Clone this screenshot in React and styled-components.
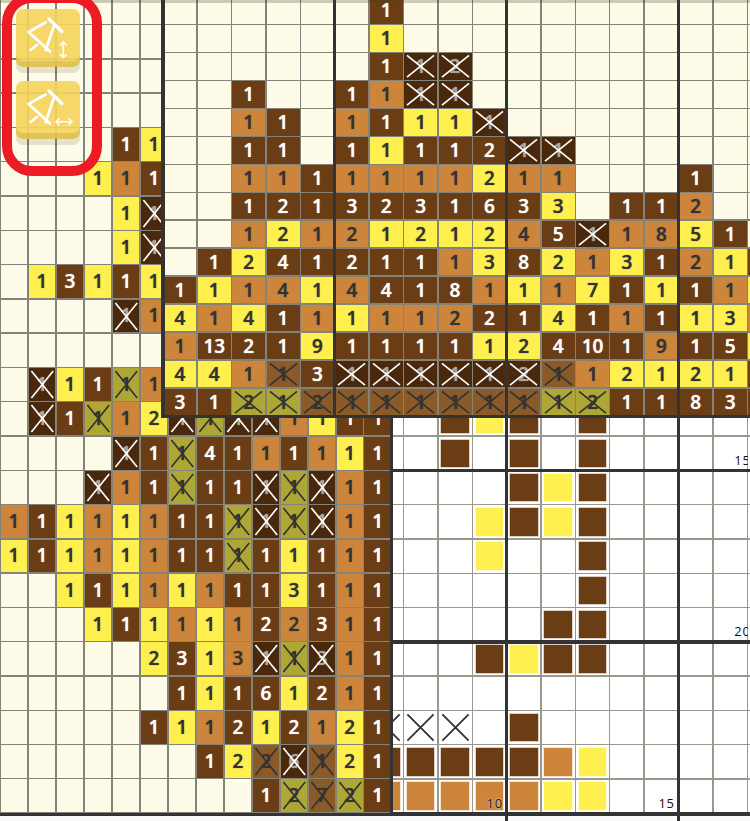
import React from 'react';
import styled, { createGlobalStyle } from 'styled-components';

const Global = createGlobalStyle`
  html, body { margin: 0; padding: 0; background: #fafafa; }
`;

const COL = 34.4;
const ROW = 34.3;
const CLUE = 28;
const GAP = 1.4;
const BOTTOM = 813.5;
const GRID_X = 162.7;

const tones = {
  D: { bg: '#6b3d14', fg: '#ffffff' },
  O: { bg: '#cc853a', fg: '#333333' },
  Y: { bg: '#fff04f', fg: '#333333' },
  xd: { bg: '#4a280b', fg: '#a9a6a0', mark: '#ffffff' },
  xo: { bg: '#8a5a28', fg: '#333333', mark: '#333333' },
  xy: { bg: '#aea736', fg: '#333333', mark: '#333333' },
};

const leftRows = [
  '', '', '', '',
  '. . . . D1 Y1',
  '. . . Y1 O1 D1',
  '. . . . Y1 xd1',
  '. . . . Y1 xd1',
  '. Y1 D3 Y1 D1 Y1',
  '. . . . xd1 O1',
  '',
  '. xd1 Y1 D1 xy1 O1',
  '. xd1 D1 xy1 O1 Y2 xd1 xy1 xd1 xd1 O1 Y1 D1 D1',
  '. . . . xd1 D1 xy1 D4 D1 O1 D1 O1 Y1 D1',
  '. . . xd1 O1 D1 xy1 D1 D1 xd1 xy1 xd1 O1 D1',
  'O1 D1 Y1 O1 Y1 O1 D1 D1 xy1 xd1 xy1 xd1 O1 D1',
  'Y1 D1 Y1 O1 Y1 O1 D1 D1 xy1 D1 Y1 D1 O1 D1',
  '. . Y1 D1 Y1 O1 Y1 O1 D1 D1 Y3 D1 O1 D1',
  '. . . Y1 D1 Y1 O1 Y1 O1 D2 O2 D3 O1 D1',
  '. . . . . Y2 D3 Y1 O3 xd1 xy1 xd3 O1 D1',
  '. . . . . . D1 Y1 D1 D6 Y1 D2 O1 D1',
  '. . . . . D1 Y1 O1 D2 Y1 D2 O1 Y2 D1',
  '. . . . . . . D1 Y2 xo2 xd6 xo1 Y2 D1',
  '. . . . . . . . . D1 xy2 xo7 xy2 D1',
];

const topRows = [
  '. . . . . . D1',
  '. . . . . . Y1',
  '. . . . . . D1 xd1 xd2',
  '. . D1 . . D1 O1 xd1 xd1',
  '. . O1 D1 . O1 D1 Y1 Y1 xd1',
  '. . D1 D1 . D1 Y1 D1 D1 D2 xd1 xd1',
  '. . O1 O1 D1 O1 O1 O1 O1 Y2 O1 O1 . . . D1',
  '. . D1 D2 D1 D3 D2 D3 D1 D6 D3 Y3 . D1 D1 O2',
  '. . O1 Y2 O1 O2 Y1 Y2 Y1 Y2 O4 D5 xd1 O1 O8 Y5 D1',
  '. D1 Y2 D4 D1 D2 D1 D1 O1 Y3 D8 Y2 O1 Y3 D1 O2 Y1 D1',
  'D1 Y1 O1 O4 Y1 O4 D4 D1 D8 O1 Y1 O1 Y7 D1 Y1 D1 O1 Y1',
  'Y4 O1 Y4 D1 O1 Y1 O1 O1 O2 D2 D1 Y4 D1 O1 D1 Y1 Y3 O1',
  'O1 D13 D2 D1 Y9 D1 D1 D1 D1 Y1 Y2 D4 D10 D1 O9 D1 D5 Y1',
  'Y4 Y4 O1 xo1 D3 xd1 xd1 xd1 xd1 xd1 xd2 xo1 O1 Y2 Y1 Y2 Y1 D1',
  'D3 D1 xy2 xy1 xo2 xo1 xo1 xo1 xo1 xo1 xo1 xy1 xy2 D1 D1 D8 D3 D1',
];

const mainRows = [
  '........DYD.D.....',
  '........D.D.D.....',
  '..........DYD.....',
  '.........YDYD.....',
  '.........Y..D.....',
  '............D.....',
  '...........DD.....',
  '.........DYDD.....',
  '..................',
  '......xxx.D.......',
  '......DDDDDOY.....',
  '......OOOOOYY.....',
];

const cellLabels = { '1-16': '15', '6-16': '20', '11-9': '10', '11-14': '15' };

const Board = styled.div`
  position: relative;
  width: 750px;
  height: 821px;
  overflow: hidden;
  background: #fafafa;
  font-family: 'Open Sans', 'Noto Sans', sans-serif;
`;

const LatticeBase = styled.div`
  position: absolute;
  display: grid;
  gap: ${GAP}px;
`;

const MainGrid = styled(LatticeBase)`
  left: ${GRID_X}px;
  top: ${BOTTOM - ROW * 12}px;
  padding: ${GAP / 2}px;
  background: #98988f;
  grid-template-columns: repeat(18, ${COL - GAP}px);
  grid-auto-rows: ${ROW - GAP}px;
  z-index: 1;
`;

const LeftClues = styled(LatticeBase)`
  left: 0;
  top: ${BOTTOM - ROW * 24}px;
  padding: ${GAP / 2}px;
  background: #84837a;
  grid-template-columns: repeat(14, ${CLUE - GAP}px);
  grid-auto-rows: ${ROW - GAP}px;
  z-index: 2;
`;

const TopClues = styled(LatticeBase)`
  left: ${GRID_X}px;
  top: ${417 - CLUE * 15 - 0.7}px;
  padding: ${GAP / 2}px;
  background: #84837a;
  grid-template-columns: repeat(18, ${COL - GAP}px);
  grid-auto-rows: ${CLUE - GAP}px;
  z-index: 3;
`;

const ClueCell = styled.div`
  position: relative;
  display: flex;
  align-items: center;
  justify-content: center;
  overflow: hidden;
  background: ${(p) => (p.$tone ? tones[p.$tone].bg : '#fefbe8')};
  color: ${(p) => (p.$tone ? tones[p.$tone].fg : '#333')};
  font-size: 19px;
  font-weight: 600;
  line-height: 1;
  text-shadow: 0 0 1px currentColor;
`;

const GridCell = styled.div`
  position: relative;
  background: #ffffff;
  display: flex;
  align-items: stretch;
  justify-content: stretch;
`;

const Fill = styled.div`
  flex: 1;
  margin: 2.7px;
  background: ${(p) => tones[p.$tone].bg};
  box-shadow: 0 0 0 0.6px ${(p) => tones[p.$tone].bg}66;
`;

const CellLabel = styled.span`
  position: absolute;
  right: ${(p) => p.$right}px;
  bottom: 3px;
  font-size: 13px;
  line-height: 1;
  font-weight: 500;
  letter-spacing: 0.8px;
  color: #111;
  text-shadow: 0 0 2px #fff;
`;

const Mark = styled.svg`
  position: absolute;
  inset: 0;
  width: 100%;
  height: 100%;
`;

const Rule = styled.div`
  position: absolute;
  background: #333333;
  ${(p) =>
    p.$horizontal
      ? `left: ${p.$from}px; width: ${p.$length}px; top: ${p.$at - 1.7}px; height: 3.4px;`
      : `top: ${p.$from}px; height: ${p.$length}px; left: ${p.$at - 1.7}px; width: 3.4px;`}
  z-index: ${(p) => p.$layer};
`;

const TopFade = styled.div`
  position: absolute;
  left: 0;
  top: 0;
  width: 100%;
  height: 3px;
  background: rgba(70, 65, 30, 0.26);
  z-index: 4;
`;

const Tools = styled.div`
  position: absolute;
  left: 16px;
  top: 9px;
  display: flex;
  flex-direction: column;
  gap: 14px;
  z-index: 5;
`;

const ToolButton = styled.button`
  display: block;
  width: 64px;
  height: 58px;
  padding: 0;
  border: 0;
  border-radius: 7px;
  background: rgba(245, 212, 92, 0.9);
  box-shadow: inset 0 -6px 0 rgba(190, 160, 60, 0.35), 0 6px 0 rgba(70, 70, 30, 0.14);
`;

const ToolIcon = styled.svg`
  display: block;
  width: 64px;
  height: 58px;
`;

const Highlight = styled.div`
  position: absolute;
  left: 2px;
  top: -7px;
  width: 80px;
  height: 163px;
  border: 10px solid #ed1c24;
  border-radius: 30px;
  z-index: 6;
`;

const parseToken = (t) => {
  if (!t || t === '.') return null;
  const m = t.match(/^(xd|xo|xy|D|O|Y)(\d+)$/);
  return { tone: m[1], num: m[2] };
};

const Cross = ({ color, inset = 3, width = 1.7 }) => (
  <Mark viewBox="0 0 100 100" preserveAspectRatio="none">
    <path
      d={`M${inset * 3} ${inset * 3}L${100 - inset * 3} ${100 - inset * 3}M${100 - inset * 3} ${inset * 3}L${inset * 3} ${100 - inset * 3}`}
      stroke={color}
      strokeWidth={width}
      vectorEffect="non-scaling-stroke"
      fill="none"
    />
  </Mark>
);

const clueGrid = (rows, columns) =>
  rows.flatMap((row, r) => {
    const tokens = row ? row.split(' ') : [];
    return Array.from({ length: columns }, (_, c) => {
      const parsed = parseToken(tokens[c]);
      if (!parsed) return <ClueCell key={`${r}-${c}`} />;
      const mark = tones[parsed.tone].mark;
      return (
        <ClueCell key={`${r}-${c}`} $tone={parsed.tone}>
          {parsed.num}
          {mark && <Cross color={mark} inset={3} />}
        </ClueCell>
      );
    });
  });

const ToolGlyph = ({ vertical }) => (
  <ToolIcon viewBox="0 0 64 58" fill="none" stroke="#fff" strokeLinecap="round">
    <path d="M33 10L45.8 22.5" strokeWidth="3.4" />
    <path d="M12.5 23L29.5 13.5M12.5 23L34 42.5M37.5 18L29.5 41.5M14.5 41L21 36" strokeWidth="2.8" />
    {vertical ? (
      <path d="M47.3 33V48.5M43.8 36.5L47.3 33L50.8 36.5M43.8 45L47.3 48.5L50.8 45" strokeWidth="1.6" strokeLinecap="butt" />
    ) : (
      <path d="M40 40.7H56M43.5 37.2L40 40.7L43.5 44.2M52.5 37.2L56 40.7L52.5 44.2" strokeWidth="1.6" strokeLinecap="butt" />
    )}
  </ToolIcon>
);

export default function App() {
  const gridRight = 750;
  return (
    <Board>
      <Global />
      <MainGrid>
        {mainRows.flatMap((row, r) =>
          row.split('').map((ch, c) => {
            const label = cellLabels[`${r}-${c}`];
            return (
              <GridCell key={`${r}-${c}`}>
                {'DOY'.includes(ch) && <Fill $tone={ch} />}
                {ch === 'x' && <Cross color="#333" inset={3.4} width={1.8} />}
                {label && <CellLabel $right={c === 16 ? -4 : 3}>{label}</CellLabel>}
              </GridCell>
            );
          })
        )}
      </MainGrid>
      <Rule $at={GRID_X + COL * 10} $from={400} $length={421} $layer={1} />
      <Rule $at={GRID_X + COL * 15} $from={400} $length={421} $layer={1} />
      <Rule $horizontal $at={BOTTOM - ROW * 10} $from={0} $length={gridRight} $layer={2} />
      <Rule $horizontal $at={BOTTOM - ROW * 5} $from={0} $length={gridRight} $layer={2} />
      <Rule $horizontal $at={BOTTOM + 0.5} $from={0} $length={gridRight} $layer={2} />
      <Rule $horizontal $at={BOTTOM - ROW * 15} $from={0} $length={165} $layer={2} />
      <Rule $horizontal $at={BOTTOM - ROW * 20} $from={0} $length={165} $layer={2} />

      <LeftClues>{clueGrid(leftRows, 14)}</LeftClues>
      <Rule $at={391.5} $from={0} $length={816} $layer={2} />

      <TopClues>{clueGrid(topRows, 18)}</TopClues>
      <Rule $at={163} $from={0} $length={418} $layer={3} />
      <Rule $at={GRID_X + COL * 5} $from={0} $length={418} $layer={3} />
      <Rule $at={GRID_X + COL * 10} $from={0} $length={418} $layer={3} />
      <Rule $at={GRID_X + COL * 15} $from={0} $length={418} $layer={3} />
      <Rule $horizontal $at={416.3} $from={162} $length={588} $layer={3} />

      <TopFade />
      <Tools>
        <ToolButton aria-label="Mirror vertically"><ToolGlyph vertical /></ToolButton>
        <ToolButton aria-label="Mirror horizontally"><ToolGlyph /></ToolButton>
      </Tools>
      <Highlight />
    </Board>
  );
}
